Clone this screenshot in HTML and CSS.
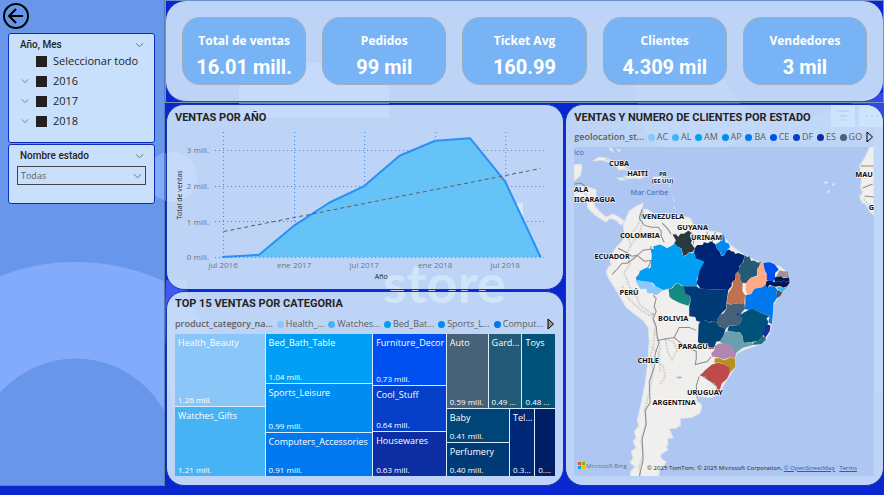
FILE: index.html
```html
<!DOCTYPE html>
<html lang="es">
<head>
<meta charset="utf-8">
<meta name="viewport" content="width=device-width, initial-scale=1">
<title>Ventas store</title>
<link rel="stylesheet" href="styles.css">
</head>
<body>
<svg class="backdrop" viewBox="0 0 884 495" preserveAspectRatio="xMidYMid slice" aria-hidden="true">
  <g fill="#5c6cff">
    <rect x="239" y="63" width="150" height="55"/>
    <circle cx="172" cy="177" r="25"/>
    <path d="M629 30h90l2 40q5 20 20 34q30 30 80 10l63-22v300h-10V130q-60 20-130 8q-70 40-100-10q-10-30-9-58z" opacity=".5"/>
    <path d="M166 280h20q4 50 44 60l-40 4q-10 60 10 130h-10q-30-80-24-194z" opacity=".7"/>
  </g>
  <rect x="517" y="203" width="6" height="14" fill="#fff"/>
  <text class="wordmark" x="383" y="303">store</text>
</svg>
<div class="report">
  <aside class="sidebar">
    <svg class="rings" viewBox="0 0 165 487" preserveAspectRatio="xMinYMax slice" aria-hidden="true">
      <circle cx="172" cy="177" r="25" fill="#82acfb"/>
      <circle cx="76" cy="476" r="213" fill="#82acfb"/>
      <circle cx="76" cy="461" r="101" fill="#6796ea"/>
    </svg>
    <button class="back" type="button" aria-label="Atrás">
      <svg viewBox="0 0 28 28" aria-hidden="true"><circle cx="14" cy="14" r="12"/><path d="M21 14H7M14 7l-7 7 7 7"/></svg>
    </button>
    <section class="slicer slicer-date">
      <h2>Año, Mes <svg class="chev" viewBox="0 0 10 6" aria-hidden="true"><path d="M1 1l4 4 4-4"/></svg></h2>
      <ul>
        <li><span></span><label><input type="checkbox">Seleccionar todo</label></li>
        <li><svg class="chev" viewBox="0 0 10 6" aria-hidden="true"><path d="M1 1l4 4 4-4"/></svg><label><input type="checkbox">2016</label></li>
        <li><svg class="chev" viewBox="0 0 10 6" aria-hidden="true"><path d="M1 1l4 4 4-4"/></svg><label><input type="checkbox">2017</label></li>
        <li><svg class="chev" viewBox="0 0 10 6" aria-hidden="true"><path d="M1 1l4 4 4-4"/></svg><label><input type="checkbox">2018</label></li>
      </ul>
    </section>
    <section class="slicer slicer-state">
      <h2><label for="estado">Nombre estado</label> <svg class="chev" viewBox="0 0 10 6" aria-hidden="true"><path d="M1 1l4 4 4-4"/></svg></h2>
      <div class="drop">
        <select id="estado"><option>Todas</option></select>
        <svg class="chev" viewBox="0 0 10 6" aria-hidden="true"><path d="M1 1l4 4 4-4"/></svg>
      </div>
    </section>
  </aside>

  <main>
    <div class="kpi-frame">
      <div class="kpis">
        <div class="kpi"><span>Total de ventas</span><strong>16.01 mill.</strong></div>
        <div class="kpi"><span>Pedidos</span><strong>99 mil</strong></div>
        <div class="kpi"><span>Ticket Avg</span><strong>160.99</strong></div>
        <div class="kpi"><span>Clientes</span><strong>4.309 mil</strong></div>
        <div class="kpi"><span>Vendedores</span><strong>3 mil</strong></div>
      </div>
    </div>

    <div class="columns">
      <div class="stack">
        <section class="panel trend">
          <h2>VENTAS POR AÑO</h2>
          <svg class="chart" viewBox="167 126 396 160" role="img" aria-label="Ventas por año">
            <g class="grid">
              <path d="M215 150.5H546M215 186.5H546M215 221.5H546M215 257.5H546"/>
              <path d="M223.5 132V257M294.5 132V257M364.5 132V257M435.5 132V257M505.5 132V257"/>
            </g>
            <path class="area" d="M223 257L259 254.7L294.7 225L329 202.7L364 186L399.3 155.7L435 140.7L470 138.3L505 181.7L540.3 257z"/>
            <path class="line" d="M222 257L259 254.7L294.7 225L329 202.7L364 186L399.3 155.7L435 140.7L470 138.3L505 181.7L540.3 257"/>
            <path class="tendency" d="M223.500 231.500L540 168.500"/>
            <g class="ticks end">
              <text x="209" y="153">3 mill.</text><text x="209" y="189">2 mill.</text><text x="209" y="225">1 mill.</text><text x="209" y="260">0 mill.</text>
            </g>
            <g class="ticks mid">
              <text x="223" y="268">jul 2016</text><text x="294" y="268">ene 2017</text><text x="364" y="268">jul 2017</text><text x="435" y="268">ene 2018</text><text x="505" y="268">jul 2018</text>
            </g>
            <text class="axis" x="381" y="279">Año</text>
            <text class="axis" transform="translate(182 195) rotate(-90)">Total de ventas</text>
          </svg>
        </section>

        <section class="panel categories">
          <h2>TOP 15 VENTAS POR CATEGORIA</h2>
          <div class="legend">
            <b>product_category_na...</b>
            <span class="c1">Health_...</span><span class="c2">Watches...</span><span class="c3">Bed_Bat...</span><span class="c4">Sports_L...</span><span class="c5">Comput...</span>
            <button type="button" aria-label="Siguiente"><svg viewBox="0 0 8 12" aria-hidden="true"><path d="M1 1v10l5.500-5z" fill="#999"/></svg></button>
          </div>
          <div class="treemap">
            <div class="rows first">
              <div class="tile c1"><span>Health_Beauty</span><small>1.26 mill.</small></div>
              <div class="tile c2"><span>Watches_Gifts</span><small>1.21 mill.</small></div>
            </div>
            <div class="rows second">
              <div class="tile c3"><span>Bed_Bath_Table</span><small>1.04 mill.</small></div>
              <div class="tile c4"><span>Sports_Leisure</span><small>0.99 mill.</small></div>
              <div class="tile c5"><span>Computers_Accessories</span><small>0.91 mill.</small></div>
            </div>
            <div class="rows third">
              <div class="tile c6"><span>Furniture_Decor</span><small>0.73 mill.</small></div>
              <div class="tile c7"><span>Cool_Stuff</span><small>0.64 mill.</small></div>
              <div class="tile c8"><span>Housewares</span><small>0.63 mill.</small></div>
            </div>
            <div class="rows fourth">
              <div class="cols upper">
                <div class="tile c9"><span>Auto</span><small>0.59 mill.</small></div>
                <div class="tile c10"><span>Gard...</span><small>0.49 ...</small></div>
                <div class="tile c11"><span>Toys</span><small>0.48 ...</small></div>
              </div>
              <div class="cols lower">
                <div class="rows pair">
                  <div class="tile c12"><span>Baby</span><small>0.41 mill.</small></div>
                  <div class="tile c13"><span>Perfumery</span><small>0.40 mill.</small></div>
                </div>
                <div class="tile c14"><span>Tel...</span><small>0.3...</small></div>
                <div class="tile c15"><span></span><small>0....</small></div>
              </div>
            </div>
          </div>
        </section>
      </div>

      <section class="panel states">
        <div class="tools">
          <button type="button" aria-label="Filtros"><svg viewBox="0 0 24 22" aria-hidden="true"><path d="M6 6h12M8 11h8M10 15h4"/></svg></button>
          <button type="button" aria-label="Más opciones"><svg viewBox="0 0 24 22" aria-hidden="true"><path d="M7 11h2M12 11h2M17 11h2"/></svg></button>
        </div>
        <h2>VENTAS Y NUMERO DE CLIENTES POR ESTADO</h2>
        <div class="legend">
          <b>geolocation_st...</b>
          <span class="c1">AC</span><span class="c2">AL</span><span class="c3">AM</span><span class="c4">AP</span><span class="c5">BA</span><span class="c6">CE</span><span class="c7">DF</span><span class="c8">ES</span><span class="c9">GO</span>
          <button type="button" aria-label="Siguiente"><svg viewBox="0 0 8 12" aria-hidden="true"><path d="M1 1v10l5.500-5z" fill="none"/></svg></button>
        </div>
        <div class="map">
          <svg viewBox="33 141 897 984" role="img" aria-label="Mapa de ventas por estado">
            <rect x="33" y="141" width="897" height="984" fill="#adc7f2"/>
            <g transform="scale(3) translate(-564 -100)">
              <g class="land">
                <path d="M624 225L630 211L637 206L644 203L642 211L640 215L643 220L646 217L644 209L648 209L655 214L664 213L674 215L684 216L691 218L694 224L702 227L708 231L713 231L722 233L731 245L745 255L760 262L780 266L789 273L790 282L785 290L778 298L774 305L773 320L770 333L765 341L757 345L745 349L737 353L736 360L735 368L731 374L724 385L721 391L719 394L712 397L700 396L697 400L702 404L702 409L700 413L692 417L681 418L681 425L676 428L670 428L672 433L674 437L668 438L669 443L667 447L669 449L664 452L661 455L663 459L667 461L664 466L661 468L659 476L631 476L632 470L636 466L631 462L634 457L632 451L637 447L634 441L637 437L635 431L640 425L638 420L642 403L646 383L649 360L650 340L649 327L644 320L636 314L627 307L622 298L617 290L610 279L607 272L609 267L612 265L611 257L614 252L617 247L622 242L626 237L625 231z"/>
                <path d="M575 165L582 164L583 168L581 176L575 181zM575 188L580 186L589 187L597 190L597 197L595 205L601 212L607 217L614 214L620 217L625 221L622 225L617 220L611 218L607 222L602 219L595 214L589 208L588 202L581 198L575 196z"/>
                <path d="M594 161L600 157L607 158L613 161L619 163L625 167L629 169L620 170L617 166L609 162L603 160zM628 171L635 171L641 175L645 177L640 179L636 178L628 179L625 176L633 177zM618 178h6l2 2h-5zM654 177h8v2h-8zM618 149l3 1-1 2zM610 147l3 2 1 3-3-2zM670 185l1 2M674 197l1 5M675 206l1 3M677 215l2 1"/>
                <path d="M870 147L874 147V215L870 211L867 205L862 202L860 196L863 193L861 187L862 178L860 166L865 158zM825 182h3v1h-3zM833 184h2v1h-2zM828 191h2v1h-2z"/>
              </g>
              <g class="relief">
                <path d="M628 235l4 10-5 9 4 10-6 8 5 14 7 9 4 10 10 7 5 12-2 22-3 12 3 14-4 20-4 16 1 14-5 18 2 14-4 12 2 14-4 16M623 286l7 13 12 11 10 6M630 236l8-9 4-10M632 245l9-13 2-9M656 330l5 18-3 12 6 6 2 10-5 8M666 339l8 2 4 9-5 9-4-6zM652 346l8 7 1 18M577 192l8 0 5 7M607 159l7 3M864 199l7 8"/>
              </g>
              <g class="borders">
                <path d="M643 209l-3 9 5 7 7 2 7 0 3 4 0 5 3 6M672 234l-4-6-5-5M652 246l-1 3-7 1-9 8-7 5-5 0-5 6-5 5M619 248l6 3 8 5 5-1 7 6 8-1 4 6M652 260l-3 7-9 7-2 8 6 3M654 295l3 3-2 8 2 5-3 8 3 7 1 10 2 6M660 342l-4 11-1 14-5 14 1 21-5 8 1 14-4 14 1 21-3 13-2 10-3 9M658 340l10-2 7-1M675 337l5-10 10 0 7 3M675 337l9 8 13 6 0 7-1 6 12-3 4-5M700 376l-3 9 1 13M701 374l12 8 7 6M690 231l5 5-1 8M708 232l-1 7M716 232l-3 10M575 184l7-1 5 4M583 199l9 1M861 166h13M863 188l10-4M865 196l9 1"/>
              </g>
              <ellipse cx="680" cy="377" rx="3" ry="1" fill="#91bdf0"/>
              <ellipse cx="654" cy="314" rx="2" ry="1" transform="rotate(60 654 314)" fill="#91bdf0"/>
            </g>
            <g transform="translate(0 300)">
              <path fill="#283a3e" d="M328 103L338 102L345 110L352 101L362 101L375 92L383 98L380 108L386 121L383 128L395 145L388 155L376 157L371 163L360 168L355 145L342 139L333 130L338 120z"/>
              <path fill="#009ff3" d="M262 145L272 147L270 139L290 133L304 139L310 144L323 138L335 130L347 142L355 145L357 161L362 169L371 164L377 157L387 160L394 151L400 165L425 180L414 205L410 218L400 237L402 258L362 257L354 255L346 247L334 252L326 262L300 270L280 260L268 247L220 240L218 232L228 222L230 212L247 204L262 204L266 165z"/>
              <path fill="#8cc8fa" d="M218 240L262 245L270 254L300 268L285 282L275 284L268 279L253 279L250 265L232 266L224 254z"/>
              <path fill="#168980" d="M316 265L328 264L334 253L346 248L353 256L363 257L364 278L381 288L381 305L375 316L350 308L330 298L319 290z"/>
            </g>
            <g transform="translate(378 300)">
              <path fill="#0089f0" d="M100 100L106 112L108 126L118 130L122 141L113 149L105 165L96 166L92 154L85 148L79 132L92 125z"/>
              <path fill="#002475" d="M18 142L24 134L40 134L44 126L56 129L65 123L78 132L84 147L91 154L96 167L105 165L112 151L119 148L127 154L133 154L138 161L147 158L165 166L162 184L150 198L151 208L141 218L137 239L127 247L127 257L117 269L34 265L22 248L31 212L45 184L20 174L15 153z"/>
              <path fill="#003b78" d="M-16 258H20L34 265L117 269L112 302L111 325L98 337L85 356V367L70 362L60 366L50 360L32 364L22 362L18 350L0 348L0 318L4 302L3 288L-14 279z"/>
              <path fill="#004475" d="M28 372L34 362L50 360L61 367L71 362L84 367L89 377L109 385L103 405L94 421L81 424L74 442L62 447L54 430L32 430L26 424z"/>
              <path fill="#466178" d="M113 309L124 314L134 309L148 311L165 308L167 325L156 337L159 354L149 374L119 376L108 387L86 374L82 361L90 345L103 339L112 325z"/>
              <path fill="#c07150" d="M145 215L153 221L151 237L160 245L159 273L167 284L165 307L149 312L136 309L123 314L112 305L117 278L130 258L130 242L139 238L137 221z"/>
              <path fill="#235a74" d="M165 165L174 170L180 168L185 182L194 181L204 187L217 186L204 206L203 226L183 233L170 249L159 247L152 237L153 223L145 215L155 191L163 185z"/>
              <path fill="#ffa987" d="M218 187L222 189L226 211L232 224L233 247L219 260L203 263L194 265L190 278L174 283L168 269L170 249L183 233L204 228L203 207L210 200L211 189z"/>
              <path fill="#0052f0" d="M222 188L240 186L255 192L268 208L257 218L256 239L246 244L232 240L232 221L226 210z"/>
              <path fill="#a19095" d="M270 210L281 213L296 214L299 232H280L276 228L257 232L264 223z"/>
              <path fill="#001650" d="M255 232L275 228L282 234L299 232L300 248L293 258L281 262L272 257L256 259L240 253L234 264L227 260L232 242L247 242L256 246z"/>
              <path d="M255 246l12-3 8 3 8-6 4 5 12-2" fill="none" stroke="#315ea5" stroke-width="2"/>
              <path fill="#43b4f4" d="M260 262L270 259L281 263L295 259L285 270L278 277L269 270z"/>
              <path fill="#4c5458" d="M265 268L273 274L279 276L272 288L262 293L260 283z"/>
              <path fill="#0079ef" d="M168 285L186 281L195 265L219 261L229 252L234 264L241 257L256 259L264 269L260 283L264 291L252 309L251 333L247 372L237 365L241 347L217 338L202 333L188 324L179 329L166 326L168 308z"/>
              <path fill="#00527a" d="M162 337L178 329L188 324L203 333L241 348L231 354L237 365L230 381L220 406L207 422L163 428L159 406L152 396L129 394L114 390L119 377L149 374L159 354L153 346z"/>
              <path fill="#0046d7" d="M142 338h9v8h-9z"/>
              <path fill="#122fa4" d="M230 371L243 375L241 392L228 412L219 401L226 389z"/>
              <path fill="#26707e" d="M205 421L218 407L228 411L229 419L216 431L188 434L192 427z"/>
              <path fill="#699fae" d="M108 394L120 392L152 396L159 407L162 427L190 425L187 435L160 442L137 460L131 449L119 433L100 430L90 423L103 405z"/>
            </g>
            <g transform="translate(0 720)">
              <path fill="#b286b0" d="M455 16L468 9L490 10L506 15L508 28L518 40L515 53L499 50L483 57L465 51L446 48L444 38L452 31z"/>
              <path fill="#b59224" d="M455 53L468 53L484 59L500 51L516 55L515 80L500 97L496 80L480 70L465 66L453 67z"/>
              <path fill="#be4a49" d="M410 105L427 88L446 72L464 67L482 71L497 80L500 96L491 115L475 129L468 153L456 155L462 139L453 128L434 118L425 108z"/>
            </g>
            <g class="places">
              <text x="168" y="197">CUBA</text><text x="223" y="227">HAITÍ</text><text class="minor" x="299" y="228">PR</text><text class="minor" x="298" y="250">(EE UU)</text>
              <text class="start" x="33" y="276">ALA</text><text class="start" x="33" y="305">IICARAGUA</text>
              <text x="300" y="358">VENEZUELA</text><text x="388" y="388">GUYANA</text><text x="430" y="418">URINAM</text>
              <text x="230" y="412">COLOMBIA</text><text x="147" y="476">ECUADOR</text><text x="198" y="583">PERÚ</text><text x="330" y="662">BOLIVIA</text>
              <text x="398" y="746">PARAGU...</text><text x="255" y="787">CHILE</text><text x="425" y="882">URUGUAY</text><text x="333" y="912">ARGENTINA</text>
              <text class="start" x="875" y="230">MAU</text><text class="start" x="915" y="330">G</text>
              <text class="sea start" x="33" y="165">ico</text><text class="sea" x="259" y="286">Mar Caribe</text>
            </g>
          </svg>
          <div class="bing"><svg viewBox="0 0 7 7" aria-hidden="true"><path fill="#f25022" d="M0 0h3v3H0z"/><path fill="#7fba00" d="M4 0h3v3H4z"/><path fill="#00a4ef" d="M0 4h3v3H0z"/><path fill="#ffb900" d="M4 4h3v3H4z"/></svg>Microsoft Bing</div>
          <div class="credits">© 2025 TomTom, © 2025 Microsoft Corporation, <a href="#osm">© OpenStreetMap</a> <a class="terms" href="#terms">Terms</a></div>
        </div>
      </section>
    </div>
  </main>
</div>
</body>
</html>
```
FILE: styles.css
```css
* { box-sizing: border-box; }
body {
  margin: 0;
  min-height: 100vh;
  position: relative;
  background: #0a26cf;
  color: #252423;
  font-family: "Open Sans", "Noto Sans", sans-serif;
  font-size: 10px;
}
h2, ul { margin: 0; padding: 0; }
button { padding: 0; border: 0; background: none; cursor: pointer; }
svg { display: block; }

.backdrop { position: absolute; inset: 0; width: 100%; height: 100%; }
.wordmark { fill: #fff; fill-opacity: .75; font: 700 54px Lato, sans-serif; }

.report {
  position: relative;
  display: grid;
  grid-template-columns: 165px 1fr;
  padding-bottom: 8px;
}

/* Filters */
.sidebar {
  position: relative;
  padding: 2px 9px 8px 8px;
  background: #6796ea;
  border-right: 1px solid #5b7fb5;
  border-bottom: 1px solid #5b7fb5;
}
.rings { position: absolute; inset: 0; width: 100%; height: 100%; }
.back { position: relative; display: block; margin-left: -6px; }
.back svg { width: 28px; height: 28px; fill: none; stroke: #000; stroke-width: 2; }
.slicer {
  position: relative;
  border: 1px solid #0b2fb8;
  border-radius: 3px;
  background: #c8e0fc;
}
.slicer h2 {
  display: flex;
  justify-content: space-between;
  align-items: center;
  padding: 0 10px 0 11px;
  font: 500 10px/12px Roboto, sans-serif;
}
.slicer-date { margin-top: 3px; height: 110px; padding-top: 5px; }
.slicer-state { margin-top: 1px; height: 60px; padding-top: 5px; }
.chev { width: 9px; height: 6px; fill: none; stroke: #667; stroke-width: 1; }
.slicer ul { list-style: none; padding-left: 12px; }
.slicer li { display: grid; grid-template-columns: 15px 1fr; align-items: center; height: 20px; }
.slicer li .chev { width: 8px; }
.slicer li label { display: flex; align-items: center; gap: 6px; font-size: 11px; line-height: 16px; }
.slicer input {
  appearance: none;
  width: 11px;
  height: 11px;
  margin: 0;
  background: #212121;
}
.drop { position: relative; margin: 4px 8px 0; }
.drop select {
  appearance: none;
  display: block;
  width: 100%;
  height: 19px;
  padding: 0 3px;
  border: 1px solid #444;
  border-radius: 0;
  background: transparent;
  color: #605e5c;
  font: 9px "Open Sans", sans-serif;
}
.drop .chev { position: absolute; right: 4px; top: 7px; pointer-events: none; }

/* Figures */
.kpi-frame { border: 1px solid #7f8fae; border-top-color: #6c8cd0; }
.kpis {
  display: grid;
  grid-template-columns: repeat(5, 1fr);
  gap: 16px;
  padding: 16px;
  border-bottom: 1px solid #2a50c0;
  border-radius: 20px;
  background: rgba(209, 232, 251, .9);
}
.kpi {
  display: flex;
  flex-direction: column;
  align-items: center;
  gap: 6px;
  height: 68px;
  padding-top: 15px;
  border: 1px solid #9eaebf;
  border-radius: 18px;
  background: rgba(110, 175, 245, .88);
  color: #fff;
  white-space: nowrap;
}
.kpi span { font: 700 12px/16px "Open Sans", sans-serif; }
.kpi strong { font: 700 20px/24px Roboto, sans-serif; }

/* Panels */
.columns { display: grid; grid-template-columns: 5fr 4fr; gap: 1px; padding: 1px 0 0 1px; }
.stack { display: flex; flex-direction: column; gap: 1px; min-width: 0; }
.panel {
  position: relative;
  min-width: 0;
  border: 1px solid #0c38b8;
  border-radius: 18px;
  background: rgba(209, 232, 251, .9);
  overflow: hidden;
}
.panel h2 { padding: 0 8px; font: 700 11px/14px Roboto, sans-serif; white-space: nowrap; }
.trend { padding: 6px 0 3px; }
.chart { width: 100%; height: auto; margin-top: 1px; }
.grid path { fill: none; stroke: #3f7ff0; stroke-width: 1; stroke-dasharray: 1 3; }
.area { fill: #61c2f7; fill-opacity: .95; }
.line { fill: none; stroke: #2b90f5; stroke-width: 2; stroke-linejoin: round; }
.tendency { fill: none; stroke: #606060; stroke-width: 1; stroke-dasharray: 4 3; }
.ticks text { font-size: 8px; fill: #6f7480; }
.end text { text-anchor: end; }
.mid text, .axis { text-anchor: middle; }
.axis { font-size: 7px; fill: #252423; }

.legend { display: flex; align-items: center; justify-content: space-between; color: #605e5c; white-space: nowrap; font-size: 9px; line-height: 12px; }
.legend b { font-weight: 600; }
.legend span { display: flex; align-items: center; gap: 2px; }
.legend span::before { content: ""; width: 7px; height: 7px; border-radius: 50%; background: var(--tone); }
.legend button svg { width: 8px; height: 12px; stroke: #000; stroke-width: 1; }

.categories { padding: 5px 8px 9px; }
.categories h2 { padding: 0; }
.categories .legend { margin: 7px 0 4px; }

.c1 { --tone: #8ac6f8; }
.c2 { --tone: #45b3f4; }
.c3 { --tone: #009ff3; }
.c4 { --tone: #008cf0; }
.c5 { --tone: #0078f0; }
.c6 { --tone: #0050f0; }
.c7 { --tone: #0640c8; }
.c8 { --tone: #0d2da3; }
.c9 { --tone: #466178; }
.c10 { --tone: #235a78; }
.c11 { --tone: #005278; }
.c12 { --tone: #004578; }
.c13 { --tone: #003b78; }
.c14 { --tone: #002878; }
.c15 { --tone: #001e64; }

.treemap { display: grid; grid-template-columns: 90fr 107fr 73fr 109fr; gap: 1px; height: 142px; background: #d9ebff; }
.rows, .cols { display: grid; gap: 1px; min-width: 0; min-height: 0; }
.first { grid-template-rows: 72fr 69fr; }
.second { grid-template-rows: 49fr 47fr 43fr; }
.third { grid-template-rows: 51fr 44fr 44fr; }
.fourth { grid-template-rows: 74fr 67fr; }
.upper { grid-template-columns: 41fr 33fr 33fr; }
.lower { grid-template-columns: 62fr 24fr 20fr; }
.pair { grid-template-rows: 1fr 1fr; }
.tile {
  display: flex;
  flex-direction: column;
  justify-content: space-between;
  min-width: 0;
  min-height: 0;
  padding: 3px 3px 1px;
  overflow: hidden;
  background: var(--tone);
  color: #fff;
  font-size: 9px;
  font-weight: 500;
  line-height: 12px;
  white-space: nowrap;
}
.tile small { font-size: 8px; line-height: 10px; }

.states { padding: 6px 9px 9px 8px; }
.states h2 { padding: 0; }
.states .legend { margin: 6px 0 4px; }
.tools { position: absolute; top: 0; right: 0; display: flex; gap: 4px; }
.tools button { background: rgba(214, 236, 255, .6); }
.tools svg { width: 24px; height: 22px; fill: none; stroke: #b2cbe6; stroke-width: 1; }
.map { position: relative; }
.map > svg { width: 100%; height: auto; }
.land { fill: #f0efed; stroke: #dfe3e8; stroke-width: 1; }
.relief { fill: none; stroke: #d3d2d0; stroke-width: 2; stroke-dasharray: 2 1; }
.borders { fill: none; stroke: #8c8c8c; stroke-width: 1; }
.places text {
  font-family: "Noto Sans", sans-serif;
  font-size: 22px;
  font-weight: 700;
  fill: #111;
  text-anchor: middle;
  paint-order: stroke;
  stroke: #fff;
  stroke-opacity: .7;
  stroke-width: 4px;
}
.places .start { text-anchor: start; }
.places .minor { font-size: 18px; }
.places .sea { font-weight: 400; fill: #3f68b8; stroke: none; }
.bing, .credits { position: absolute; bottom: 4px; font-size: 6px; line-height: 8px; white-space: nowrap; }
.bing { left: 4px; bottom: 6px; display: flex; align-items: center; gap: 1px; color: #6b7280; }
.bing svg { width: 7px; height: 7px; }
.credits { right: 17px; }
.credits a { color: #3a55b5; }
.credits .terms { margin-left: 3px; }
```
